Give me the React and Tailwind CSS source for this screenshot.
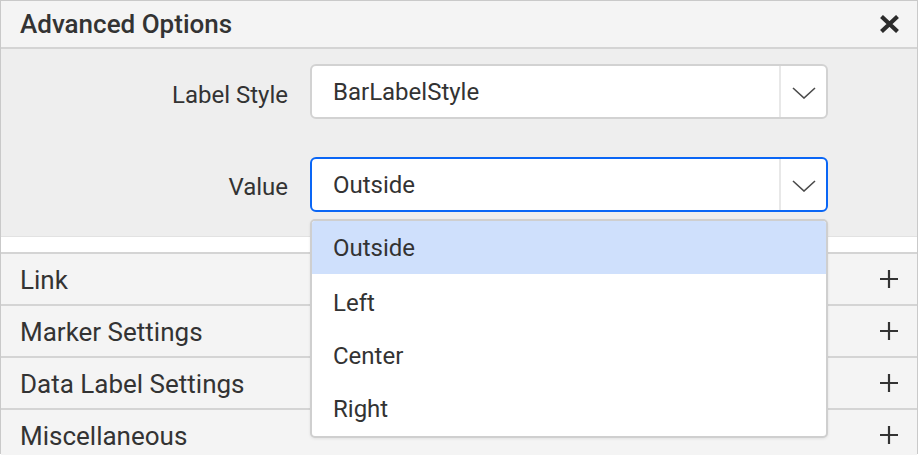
import { useState } from "react";

const FONT = { fontFamily: "Roboto, 'Noto Sans', sans-serif" };

const OPTIONS = ["Outside", "Left", "Center", "Right"];
const SECTIONS = ["Link", "Marker Settings", "Data Label Settings", "Miscellaneous"];

function Chevron() {
  return (
    <svg width="24" height="12" viewBox="0 0 24 12" fill="none">
      <path d="M1 1 L12 11 L23 1" stroke="#4a4a4a" strokeWidth="1.6" />
    </svg>
  );
}

function PlusIcon() {
  return (
    <svg width="18" height="18" viewBox="0 0 18 18">
      <path d="M9 0 V18 M0 9 H18" stroke="#333" strokeWidth="2.2" />
    </svg>
  );
}

function CloseIcon() {
  return (
    <svg width="21" height="18" viewBox="0 0 21 18">
      <path d="M2.5 1.5 L18.5 16.5 M18.5 1.5 L2.5 16.5" stroke="#2b2b2b" strokeWidth="4.2" />
    </svg>
  );
}

function Select({ value, focused, children }) {
  return (
    <div className="relative w-[518px]">
      <div
        className={`flex h-[55px] items-stretch rounded-[6px] bg-white ${
          focused ? "border-2 border-[#0a66f5]" : "border-2 border-[#d2d2d2]"
        }`}
      >
        <span className="flex flex-1 items-center pl-[21px] text-[24px] text-[#333]">{value}</span>
        <span className="flex w-[47px] items-center justify-center border-l-2 border-[#e8e8e8] pt-[2px]">
          <Chevron />
        </span>
      </div>
      {children}
    </div>
  );
}

export default function App() {
  const [value] = useState("Outside");

  return (
    <div style={FONT} className="h-[455px] w-[919px] bg-white">
      <div className="flex h-[454px] w-[918px] flex-col border border-[#c9c9c9] text-[#333]">
        {/* Header */}
        <div className="flex h-[48px] shrink-0 items-center justify-between border-b-2 border-[#d4d4d4] bg-[#f4f4f4] pl-[19px] pr-[17px]">
          <h2 className="text-[26px] font-medium text-[#333]">Advanced Options</h2>
          <button type="button" aria-label="Close" className="flex items-center">
            <CloseIcon />
          </button>
        </div>

        {/* Options body */}
        <div className="flex h-[188px] shrink-0 flex-col gap-[38px] border-b border-[#e2e2e2] bg-[#eeeeee] pt-[15px]">
          <div className="flex items-center gap-[22px]">
            <span className="w-[287px] pt-[6px] text-right text-[24px]">Label Style</span>
            <Select value="BarLabelStyle" />
          </div>
          <div className="relative z-10 flex items-center gap-[22px]">
            <span className="w-[287px] pt-[4px] text-right text-[24px]">Value</span>
            <Select value={value} focused>
              {/* Open popup list */}
              <ul className="absolute left-0 top-[62px] w-[518px] overflow-hidden rounded-[5px] border-2 border-[#cfcfcf] bg-white pb-[1px] shadow-[0_1px_3px_rgba(0,0,0,0.08)]">
                {OPTIONS.map((o, i) => (
                  <li
                    key={o}
                    className={`flex h-[53px] items-center pl-[21px] text-[24px] text-[#333] ${
                      o === value ? "bg-[#cfe0fc]" : ""
                    } ${i === 1 ? "mt-[2px]" : ""}`}
                  >
                    {o}
                  </li>
                ))}
              </ul>
            </Select>
          </div>
        </div>

        <div className="h-[15px] shrink-0 bg-white" />

        {/* Accordion sections */}
        <div className="flex flex-1 flex-col">
          {SECTIONS.map((s) => (
            <div
              key={s}
              className="flex h-[52px] shrink-0 items-center justify-between border-t-2 border-[#d4d4d4] bg-[#f4f4f4] pl-[19px] pr-[19px]"
            >
              <span className="pt-[2px] text-[26px]">{s}</span>
              <PlusIcon />
            </div>
          ))}
        </div>
      </div>
    </div>
  );
}
